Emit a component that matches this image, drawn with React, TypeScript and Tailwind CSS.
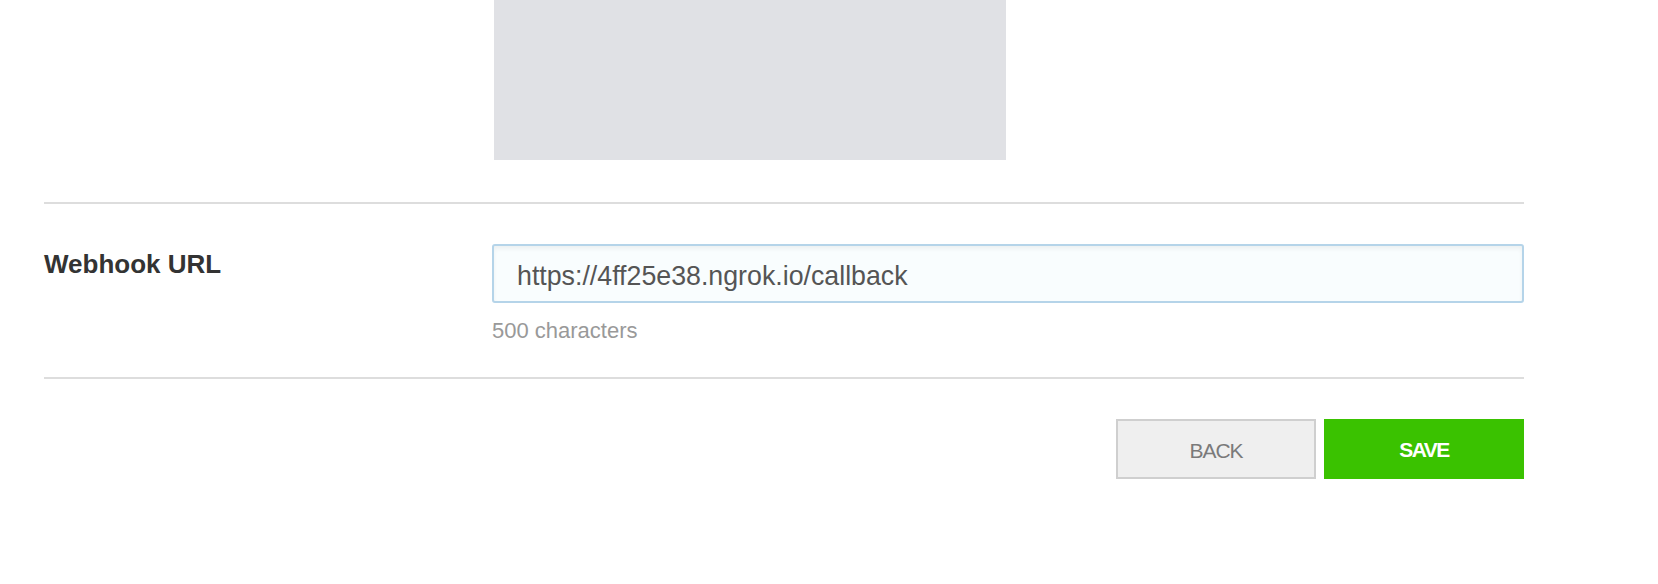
export default function App() {
  return (
    <div className="min-h-[584px] w-full bg-white font-['Liberation_Sans',Arial,sans-serif]">
      <div className="ml-[44px] w-[1480px]">
        {/* preview image placeholder */}
        <div className="grid grid-cols-[448px_1fr]">
          <div />
          <div className="ml-[2px] h-[160px] w-[512px] bg-[#e0e1e5]" />
        </div>

        <hr className="mt-[42px] h-[2px] border-0 bg-[#dddddd]" />

        <div className="grid grid-cols-[448px_1fr] pt-[40px] pb-[34px]">
          <label className="pt-[5px] text-[26px] font-bold leading-[30px] text-[#333333]">
            Webhook URL
          </label>
          <div>
            <input
              type="text"
              defaultValue="https://4ff25e38.ngrok.io/callback"
              className="box-border block h-[59px] w-full rounded-[3px] border-2 border-[#b5d4e9] bg-[#f9fdfe] pl-[23px] pt-[6px] text-[26.75px] text-[#555555] shadow-[inset_0_3px_4px_rgba(0,0,0,0.05)] outline-none"
            />
            <p className="mt-[15px] text-[22px] leading-[25px] text-[#999999]">500 characters</p>
          </div>
        </div>

        <hr className="h-[2px] border-0 bg-[#dddddd]" />

        <div className="mt-[40px] flex justify-end gap-[8px]">
          <button className="box-border h-[60px] w-[200px] border-2 border-[#cfcfcf] bg-[#efefef] pt-[4px] text-[21px] tracking-[-1px] text-[#7a7a7a]">
            BACK
          </button>
          <button className="box-border h-[60px] w-[200px] bg-[#3ac200] pt-[2px] text-[21px] font-bold tracking-[-1.5px] text-white">
            SAVE
          </button>
        </div>
      </div>
    </div>
  );
}
